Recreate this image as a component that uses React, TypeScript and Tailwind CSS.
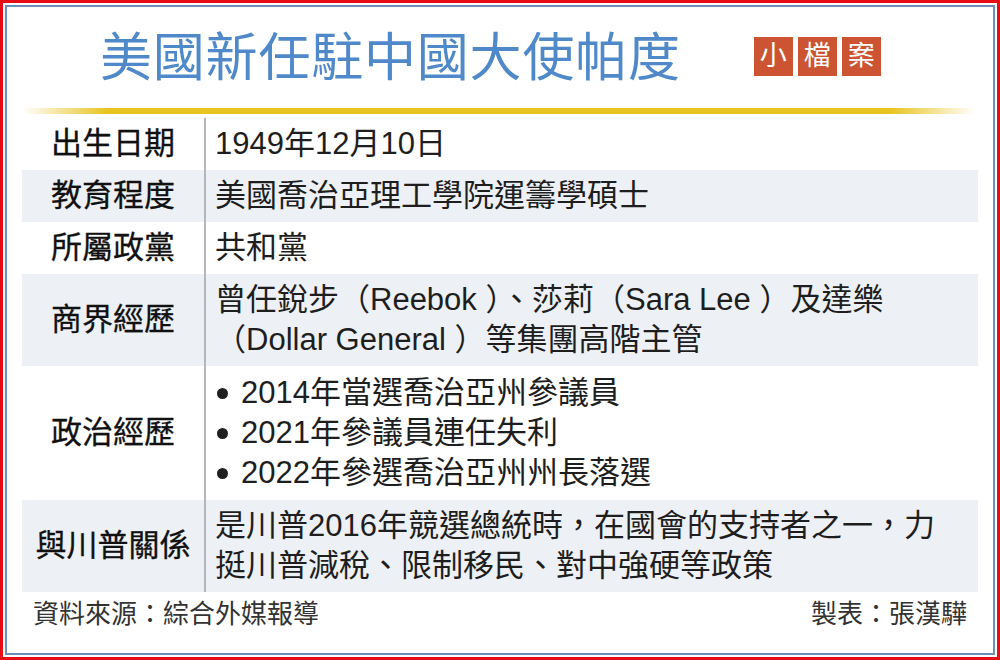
const FONT = { fontFamily: '"Liberation Sans", "Noto Sans CJK TC", sans-serif' };

type Row = { label: string; lines: string[]; shaded: boolean; bullets?: boolean };

const rows: Row[] = [
  { label: "出生日期", lines: ["1949年12月10日"], shaded: false },
  { label: "教育程度", lines: ["美國喬治亞理工學院運籌學碩士"], shaded: true },
  { label: "所屬政黨", lines: ["共和黨"], shaded: false },
  {
    label: "商界經歷",
    lines: ["曾任銳步（Reebok ）、莎莉（Sara Lee ）及達樂", "（Dollar General ）等集團高階主管"],
    shaded: true,
  },
  {
    label: "政治經歷",
    lines: ["2014年當選喬治亞州參議員", "2021年參議員連任失利", "2022年參選喬治亞州州長落選"],
    shaded: false,
    bullets: true,
  },
  {
    label: "與川普關係",
    lines: ["是川普2016年競選總統時，在國會的支持者之一，力", "挺川普減稅、限制移民、對中強硬等政策"],
    shaded: true,
  },
];

function Badge({ ch }: { ch: string }) {
  return (
    <div className="w-[39px] h-[39px] bg-[#cc5433] text-white text-[27px] leading-none flex items-center justify-center">
      {ch}
    </div>
  );
}

export default function App() {
  return (
    <div className="w-[1000px] h-[660px] bg-white border-[3px] border-[#e50d16] p-[2px]" style={FONT}>
      <div className="h-full border-2 border-[#6b8fba] px-[15px] flex flex-col">
        {/* header */}
        <div className="h-[101px] flex items-center pl-[78px]">
          <h1 className="text-[52px] leading-none text-[#5089c9] tracking-[0.8px]">美國新任駐中國大使帕度</h1>
          <div className="ml-[73px] mt-[-2px] flex gap-[5px]">
            <Badge ch="小" />
            <Badge ch="檔" />
            <Badge ch="案" />
          </div>
        </div>
        <div className="h-[6px] mr-[3px] bg-[linear-gradient(to_right,#ffffff,#e8c41e_9%,#e8c41e_91%,#ffffff)]" />

        {/* table */}
        <div className="mt-[4px] flex flex-col">
          {rows.map((r) => (
            <div key={r.label} className={`flex ${r.shaded ? "bg-[#edf0f4]" : "bg-white"}`}>
              <div className="w-[182px] shrink-0 flex items-center justify-center text-[31px] text-[#111] [-webkit-text-stroke:0.3px_#111]">
                {r.label}
              </div>
              <div
                className={`flex-1 border-l-2 border-[#b4b6b9] pl-[9px] text-[31px] leading-[40px] text-[#1e1e1e] ${
                  r.bullets ? "py-[7px]" : "py-[6px]"
                }`}
              >
                {r.lines.map((l, i) => (
                  <div key={i} className="flex items-center whitespace-pre">
                    {r.bullets && <span className="w-[11px] h-[11px] rounded-full bg-[#1e1e1e] ml-[2px] mr-[13px]" />}
                    {l}
                  </div>
                ))}
              </div>
            </div>
          ))}
        </div>

        {/* footer */}
        <div className="flex justify-between px-[11px] pt-[6px] text-[26px] leading-[32px] text-[#333]">
          <span>資料來源：綜合外媒報導</span>
          <span>製表：張漢驊</span>
        </div>
      </div>
    </div>
  );
}
